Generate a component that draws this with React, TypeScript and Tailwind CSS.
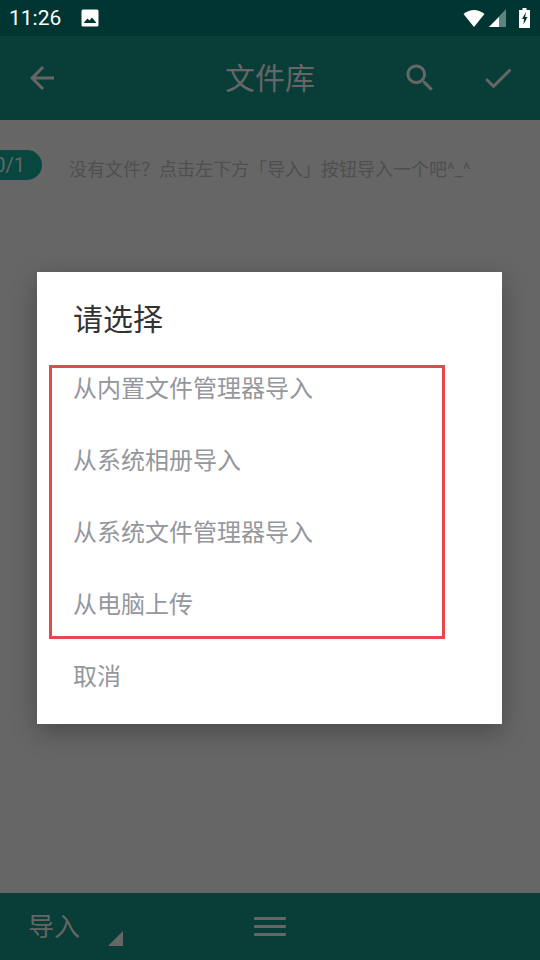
import React from "react";

const cjk = { fontFamily: '"Roboto", "Noto Sans CJK SC", sans-serif' };

function Option({ label }: { label: string }) {
  return (
    <div className="flex h-[72px] items-center pl-[36px] text-[24px] text-[#94979c]">{label}</div>
  );
}

export default function App() {
  return (
    <div className="relative flex h-[960px] w-[540px] flex-col overflow-hidden bg-[#666666]" style={cjk}>
      {/* Status bar */}
      <div className="flex h-9 items-center justify-between bg-[#003532] pl-[9px] pr-[10px] text-white">
        <div className="flex items-center gap-[20px]">
          <span className="text-[21px] leading-none">11:26</span>
          <svg width="18" height="18" viewBox="0 0 18 18">
            <rect x="0.5" y="0.5" width="17" height="17" rx="1.5" fill="#fff" />
            <path d="M2.5 14 L6.5 9.5 L8.5 11.5 L11 8.5 L15.5 14 Z" fill="#003532" />
          </svg>
        </div>
        <div className="flex items-center gap-[12px]">
          <div className="flex items-end gap-[4px]">
            <svg width="22" height="18" viewBox="0 0 22 18">
              <path d="M0.5 5 Q11 -3 21.5 5 L11 18 Z" fill="#fff" />
            </svg>
            <svg width="18" height="18" viewBox="0 0 18 18">
              <path d="M17 0 V18 H0 Z" fill="#5a8582" />
              <path d="M10 8 V18 H0 Z" fill="#fff" />
            </svg>
          </div>
          <svg width="11" height="20" viewBox="0 0 11 20">
            <path d="M3.5 0 H7.5 V2 H11 V20 H0 V2 H3.5 Z" fill="#fff" />
            <path d="M7 4 L3 11 H5 L4.5 16.5 L8.5 9 H6.2 Z" fill="#003532" />
          </svg>
        </div>
      </div>

      {/* Toolbar */}
      <div className="flex h-[84px] items-center bg-[#083d38] text-[#666666]">
        <div className="flex w-[84px] items-center justify-center">
          <svg width="36" height="36" viewBox="0 0 24 24" fill="#666666">
            <path d="M20 11H7.83l5.59-5.59L12 4l-8 8 8 8 1.41-1.41L7.83 13H20v-2z" />
          </svg>
        </div>
        <div className="flex-1 pl-[78px] pt-[2px] text-center text-[30px] leading-none">文件库</div>
        <div className="flex w-[84px] items-center justify-center">
          <svg width="36" height="36" viewBox="0 0 24 24" fill="#666666">
            <path d="M15.5 14h-.79l-.28-.27C15.41 12.59 16 11.11 16 9.5 16 5.91 13.09 3 9.5 3S3 5.91 3 9.5 5.91 16 9.5 16c1.61 0 3.09-.59 4.23-1.57l.27.28v.79l5 4.99L20.49 19l-4.99-5zm-6 0C7.01 14 5 11.99 5 9.5S7.01 5 9.5 5 14 7.01 14 9.5 11.99 14 9.5 14z" />
          </svg>
        </div>
        <div className="flex w-[78px] items-center justify-center pr-[7px]">
          <svg width="36" height="36" viewBox="0 0 24 24" fill="#666666">
            <path d="M9 16.17L4.83 12l-1.41 1.41L9 19 21 7l-1.41-1.41z" />
          </svg>
        </div>
      </div>

      {/* Content */}
      <div className="flex-1 pt-[30px]">
        <div className="flex items-start">
          <div className="flex h-[30px] w-[42px] shrink-0 items-center justify-end rounded-r-[15px] bg-[#07473f] pr-[17px] text-[20px] leading-none text-[#666666]">
            0/1
          </div>
          <div className="ml-[27px] whitespace-nowrap pt-[7px] text-[18px] leading-[25px] text-[#4f4f4f]">
            没有文件？点击左下方「导入」按钮导入一个吧^_^
          </div>
        </div>
      </div>

      {/* Bottom bar */}
      <div className="flex h-[67px] items-center bg-[#083d38] text-[#666666]">
        <div className="relative w-[254px] pl-[28px] text-[26px] leading-none">
          导入
          <div className="absolute left-[108px] top-[17px] h-0 w-0 border-b-[15px] border-l-[15px] border-b-[#666666] border-l-transparent" />
        </div>
        <svg width="32" height="20" viewBox="0 0 32 20" fill="#666666">
          <rect x="0" y="0" width="32" height="3" rx="1" />
          <rect x="0" y="8" width="32" height="3" rx="1" />
          <rect x="0" y="16" width="32" height="3" rx="1" />
        </svg>
      </div>

      {/* Dialog */}
      <div className="absolute left-[37px] top-[272px] h-[452px] w-[465px] bg-white shadow-[0_8px_24px_rgba(0,0,0,0.28)]">
        <div className="flex h-[94px] items-center pl-[36px] pt-[2px] text-[30px] leading-none text-[#333333]">请选择</div>
        <div className="-mt-[13px] flex flex-col">
          <Option label="从内置文件管理器导入" />
          <Option label="从系统相册导入" />
          <Option label="从系统文件管理器导入" />
          <Option label="从电脑上传" />
          <Option label="取消" />
        </div>
      </div>

      {/* Annotation */}
      <div className="absolute left-[49px] top-[365px] h-[274px] w-[396px] border-[3px] border-[#e8474b]" />
    </div>
  );
}
